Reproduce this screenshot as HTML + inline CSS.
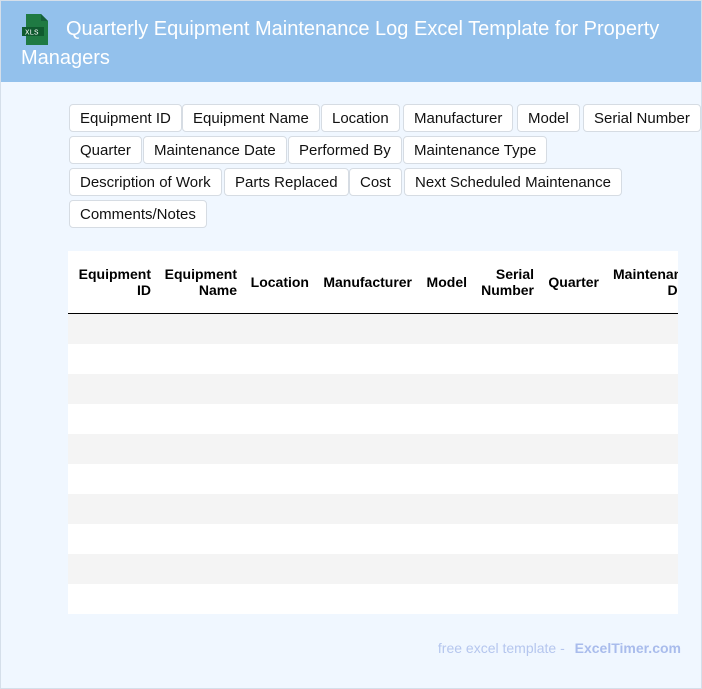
<!DOCTYPE html>
<html><head><meta charset="utf-8"><style>
*{box-sizing:border-box;margin:0;padding:0}
body{width:702px;height:689px;overflow:hidden;background:#fff;font-family:"Liberation Sans",Arial,sans-serif}
.page{position:absolute;left:0;top:0;width:702px;height:689px;background:#f0f7ff;box-shadow:inset 0 0 0 1px #d5dfea;overflow:hidden}
.hdr{position:absolute;left:1px;top:1px;width:700px;height:81px;background:#93c1ec}
.title{position:absolute;left:21px;top:15px;width:670px;color:#fff;font-size:20px;line-height:29px;text-indent:45px}
.icon{position:absolute;left:22px;top:14px}
.tag{position:absolute;height:28px;border:1px solid #d6dce3;border-radius:4px;background:#fff;font-size:15px;line-height:28px;padding:0 10px;color:#111;white-space:nowrap}
.tbl{position:absolute;left:68px;top:251px;width:610px;height:363px;background:#fff;overflow:hidden}
.th{position:absolute;top:0;height:62px;display:flex;align-items:center;justify-content:flex-end;text-align:right;font-weight:bold;font-size:14px;line-height:16px;color:#000;white-space:nowrap}
.line{position:absolute;left:0;top:62px;width:610px;height:1.5px;background:#000}
.row{position:absolute;left:0;width:610px;height:30px}
.foot{position:absolute;right:21px;top:640px;font-size:14px;color:#b5c6ee}
.foot b{color:#a9bcec;margin-left:6px}
</style></head><body><div class="page">
<div class="hdr"></div>
<svg class="icon" width="30" height="32" viewBox="0 0 30 32"><path d="M4 0h15l7 7v24H4z" fill="#1f7a43"/><path d="M19 0v7h7z" fill="#15603a"/><rect x="0" y="13" width="22" height="9" fill="#0f5a2f"/><text x="3" y="20.5" font-size="7.5" fill="#fff" font-family="Liberation Mono,monospace">XLS</text></svg>
<div class="title">Quarterly Equipment Maintenance Log Excel Template for Property Managers</div>

<div class="tag" style="left:69px;top:104px">Equipment ID</div>
<div class="tag" style="left:182px;top:104px">Equipment Name</div>
<div class="tag" style="left:321px;top:104px">Location</div>
<div class="tag" style="left:403px;top:104px">Manufacturer</div>
<div class="tag" style="left:517px;top:104px">Model</div>
<div class="tag" style="left:583px;top:104px">Serial Number</div>
<div class="tag" style="left:69px;top:136px">Quarter</div>
<div class="tag" style="left:143px;top:136px">Maintenance Date</div>
<div class="tag" style="left:288px;top:136px">Performed By</div>
<div class="tag" style="left:403px;top:136px">Maintenance Type</div>
<div class="tag" style="left:69px;top:168px">Description of Work</div>
<div class="tag" style="left:224px;top:168px">Parts Replaced</div>
<div class="tag" style="left:349px;top:168px">Cost</div>
<div class="tag" style="left:404px;top:168px">Next Scheduled Maintenance</div>
<div class="tag" style="left:69px;top:200px">Comments/Notes</div>

<div class="tbl">
<div class="th" style="left:0;width:83px">Equipment<br>ID</div>
<div class="th" style="left:90px;width:79px">Equipment<br>Name</div>
<div class="th" style="left:176px;width:65px">Location</div>
<div class="th" style="left:248px;width:96px">Manufacturer</div>
<div class="th" style="left:351px;width:48px">Model</div>
<div class="th" style="left:405px;width:61px">Serial<br>Number</div>
<div class="th" style="left:473px;width:58px">Quarter</div>
<div class="th" style="left:545px;width:100px;justify-content:flex-start;text-align:right">Maintenance<br>Date</div>
<div class="line"></div>
<div class="row" style="top:63px;background:#f4f4f4"></div>
<div class="row" style="top:123px;background:#f4f4f4"></div>
<div class="row" style="top:183px;background:#f4f4f4"></div>
<div class="row" style="top:243px;background:#f4f4f4"></div>
<div class="row" style="top:303px;background:#f4f4f4"></div>
</div>
<div class="foot">free excel template - <b>ExcelTimer.com</b></div>
</div></body></html>
